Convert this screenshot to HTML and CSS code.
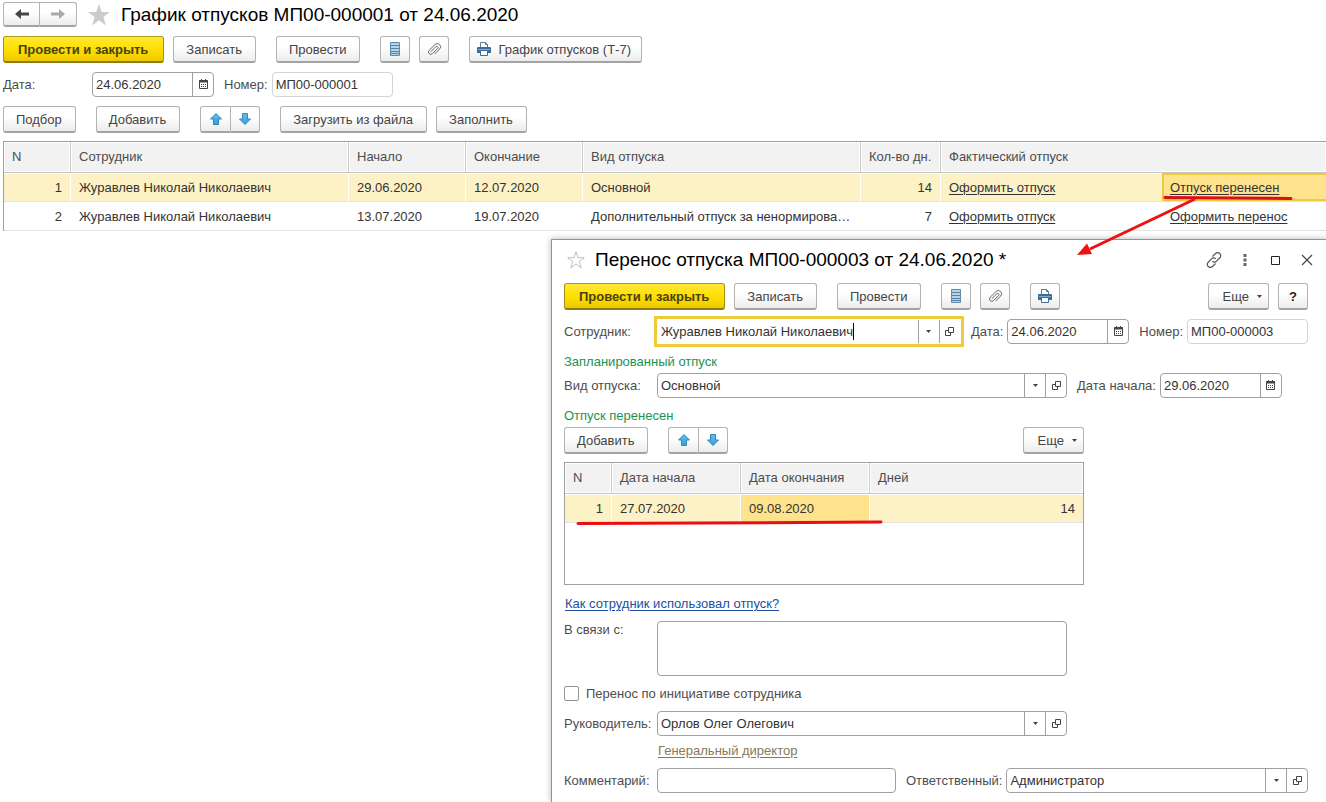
FILE: index.html
```html
<!DOCTYPE html>
<html lang="ru">
<head>
<meta charset="utf-8">
<title>График отпусков</title>
<link rel="stylesheet" href="styles.css">
</head>
<body>
<svg class="sprite" aria-hidden="true">
  <defs>
    <linearGradient id="blue" x1="0" y1="0" x2="0" y2="1"><stop offset="0" stop-color="#62bdf0"/><stop offset="1" stop-color="#35a0de"/></linearGradient>
  </defs>
  <symbol id="i-back" viewBox="0 0 16 12"><path d="M15 6H4" stroke="currentColor" stroke-width="3"/><path d="M1 6l6-5v10z" fill="currentColor"/></symbol>
  <symbol id="i-forward" viewBox="0 0 16 12"><path d="M1 6h11" stroke="currentColor" stroke-width="3"/><path d="M15 6L9 1v10z" fill="currentColor"/></symbol>
  <symbol id="i-star" viewBox="0 0 24 24"><path d="M12 1l2.700 8H23l-6.600 5 2.500 8.500L12 17.300 5.100 22.500 7.600 14 1 9h8.300z"/></symbol>
  <symbol id="i-list" viewBox="0 0 12 16"><path d="M1.500 1.500h9v13h-9z" fill="#b4d3e8" stroke="#6089aa"/><path d="M2 4.500h8M2 7.500h8M2 10.500h8M2 12.500h8" stroke="#5783a6"/></symbol>
  <symbol id="i-clip" viewBox="0 0 16 16"><path d="M5 10.500l5-5a1.300 1.300 0 0 1 1.800 1.800l-5.300 5.300a2.300 2.300 0 0 1-3.300-3.300l5.800-5.800a3.200 3.200 0 0 1 4.600 4.600l-4.600 4.600" fill="none" stroke="#666" stroke-linecap="round"/></symbol>
  <symbol id="i-print" viewBox="0 0 16 16"><path d="M4.500 7V1.500h5l2 2V7" fill="#fff" stroke="#54799b"/><path d="M9.500 1.500v2h2" fill="none" stroke="#54799b"/><path d="M2 6h12a1 1 0 0 1 1 1v5H1V7a1 1 0 0 1 1-1z" fill="#3d6c98"/><path d="M2 8.500h12" stroke="#85aacb"/><path d="M4.500 9.500h7v5h-7z" fill="#fff" stroke="#3d6c98"/></symbol>
  <symbol id="i-up" viewBox="0 0 14 14"><path d="M7 1.500L12.500 7H9.500v5.500h-5V7h-3z" fill="url(#blue)" stroke="#3585b5"/></symbol>
  <symbol id="i-down" viewBox="0 0 14 14"><path d="M7 12.500L1.500 7h3V1.500h5V7h3z" fill="url(#blue)" stroke="#3585b5"/></symbol>
  <symbol id="i-cal" viewBox="0 0 11 11"><path d="M1.500 1.500h8v8h-8z" fill="none" stroke="#444"/><path d="M1 2.500h9" stroke="#444" stroke-width="2"/><path d="M3.500 0v2M7.500 0v2" stroke="#444"/><path d="M3 5.500h6M3 7.500h6" stroke="#444" stroke-dasharray="1 1"/></symbol>
  <symbol id="i-caret" viewBox="0 0 5 3"><path d="M0 0h5L2.500 3z" fill="#444"/></symbol>
  <symbol id="i-open" viewBox="0 0 9 9"><path d="M3.500.5h5v5h-5z" fill="none" stroke="#444"/><path d="M3 3.500H.5v5h5V6" fill="none" stroke="#444"/></symbol>
  <symbol id="i-link" viewBox="0 0 18 18"><g fill="none" stroke="#555" stroke-width="1.200"><path d="M7.500 5.500l3-3a3 3 0 0 1 4.300 0 3 3 0 0 1 0 4.300l-3.300 3.300a3 3 0 0 1-4.200 0"/><path d="M10.500 12.500l-3 3a3 3 0 0 1-4.300 0 3 3 0 0 1 0-4.300l3.300-3.300a3 3 0 0 1 4.200 0"/></g></symbol>
  <symbol id="i-dots" viewBox="0 0 4 12"><path d="M.5 0h3v3h-3zM.5 4.500h3v3h-3zM.5 9h3v3h-3z" fill="#666"/></symbol>
  <symbol id="i-max" viewBox="0 0 9 9"><path d="M.5.5h8v8h-8z" fill="none" stroke="#222"/></symbol>
  <symbol id="i-close" viewBox="0 0 12 12"><path d="M1 1l10 10M11 1L1 11" stroke="#444" stroke-width="1.200"/></symbol>
</svg>

<main class="document">
  <header class="title-row">
    <div class="button-pair nav">
      <button class="btn" type="button" aria-label="Назад"><svg width="16" height="12"><use href="#i-back"/></svg></button>
      <button class="btn" type="button" aria-label="Вперед" disabled><svg width="16" height="12"><use href="#i-forward"/></svg></button>
    </div>
    <button class="plain star" type="button" aria-label="В избранное"><svg width="24" height="24"><use href="#i-star"/></svg></button>
    <h1>График отпусков МП00-000001 от 24.06.2020</h1>
  </header>

  <div class="toolbar commands">
    <button class="btn primary" type="button">Провести и закрыть</button>
    <button class="btn" type="button">Записать</button>
    <button class="btn spaced" type="button">Провести</button>
    <button class="btn square spaced" type="button" aria-label="Движения"><svg width="12" height="16"><use href="#i-list"/></svg></button>
    <button class="btn square" type="button" aria-label="Файлы"><svg width="16" height="16"><use href="#i-clip"/></svg></button>
    <button class="btn print spaced" type="button"><svg width="16" height="16"><use href="#i-print"/></svg>График отпусков (Т-7)</button>
  </div>

  <div class="form-row main-fields">
    <label for="doc-date">Дата:</label>
    <div class="field date"><input id="doc-date" type="text" value="24.06.2020"><button type="button" aria-label="Календарь"><svg width="11" height="11"><use href="#i-cal"/></svg></button></div>
    <label class="inline" for="doc-number">Номер:</label>
    <div class="field number"><input id="doc-number" type="text" value="МП00-000001" readonly></div>
  </div>

  <div class="toolbar">
    <button class="btn" type="button">Подбор</button>
    <button class="btn spaced" type="button">Добавить</button>
    <div class="button-pair spaced">
      <button class="btn" type="button" aria-label="Вверх"><svg width="14" height="14"><use href="#i-up"/></svg></button>
      <button class="btn" type="button" aria-label="Вниз"><svg width="14" height="14"><use href="#i-down"/></svg></button>
    </div>
    <button class="btn spaced" type="button">Загрузить из файла</button>
    <button class="btn" type="button">Заполнить</button>
  </div>

  <div class="grid-frame schedule">
    <table>
      <colgroup><col class="c-n"><col class="c-person"><col class="c-date"><col class="c-date"><col class="c-person"><col class="c-days"><col class="c-fact"><col></colgroup>
      <thead>
        <tr><th>N</th><th>Сотрудник</th><th>Начало</th><th>Окончание</th><th>Вид отпуска</th><th>Кол-во дн.</th><th colspan="2">Фактический отпуск</th></tr>
      </thead>
      <tbody>
        <tr class="selected"><td class="num">1</td><td>Журавлев Николай Николаевич</td><td>29.06.2020</td><td>12.07.2020</td><td>Основной</td><td class="num">14</td><td class="open"><a href="#leave-1">Оформить отпуск</a></td><td class="active framed"><a href="#transfer-1">Отпуск перенесен</a></td></tr>
        <tr><td class="num">2</td><td>Журавлев Николай Николаевич</td><td>13.07.2020</td><td>19.07.2020</td><td>Дополнительный отпуск за ненормирова…</td><td class="num">7</td><td class="open"><a href="#leave-2">Оформить отпуск</a></td><td><a href="#transfer-2">Оформить перенос</a></td></tr>
      </tbody>
    </table>
  </div>
</main>

<section class="window" aria-labelledby="window-title">
  <header class="window-title">
    <button class="plain star outline" type="button" aria-label="В избранное"><svg width="18" height="18"><use href="#i-star"/></svg></button>
    <h2 id="window-title">Перенос отпуска МП00-000003 от 24.06.2020 *</h2>
    <div class="window-controls">
      <button class="plain" type="button" aria-label="Ссылка"><svg width="18" height="18"><use href="#i-link"/></svg></button>
      <button class="plain" type="button" aria-label="Меню"><svg width="4" height="12"><use href="#i-dots"/></svg></button>
      <button class="plain" type="button" aria-label="Развернуть"><svg width="9" height="9"><use href="#i-max"/></svg></button>
      <button class="plain" type="button" aria-label="Закрыть"><svg width="12" height="12"><use href="#i-close"/></svg></button>
    </div>
  </header>

  <div class="toolbar window-commands">
    <button class="btn primary" type="button">Провести и закрыть</button>
    <button class="btn" type="button">Записать</button>
    <button class="btn spaced" type="button">Провести</button>
    <button class="btn square spaced" type="button" aria-label="Движения"><svg width="12" height="16"><use href="#i-list"/></svg></button>
    <button class="btn square" type="button" aria-label="Файлы"><svg width="16" height="16"><use href="#i-clip"/></svg></button>
    <button class="btn square spaced" type="button" aria-label="Печать"><svg width="16" height="16"><use href="#i-print"/></svg></button>
    <button class="btn more push" type="button">Еще<svg width="5" height="3"><use href="#i-caret"/></svg></button>
    <button class="btn square help" type="button">?</button>
  </div>

  <div class="form-row">
    <label for="employee">Сотрудник:</label>
    <div class="field grow focused"><span class="editing"><input id="employee" type="text" value="Журавлев Николай Николаевич"></span><button type="button" aria-label="Выбрать"><svg width="5" height="3"><use href="#i-caret"/></svg></button><button type="button" aria-label="Открыть"><svg width="9" height="9"><use href="#i-open"/></svg></button></div>
    <label class="inline" for="transfer-date">Дата:</label>
    <div class="field date"><input id="transfer-date" type="text" value="24.06.2020"><button type="button" aria-label="Календарь"><svg width="11" height="11"><use href="#i-cal"/></svg></button></div>
    <label class="inline" for="transfer-number">Номер:</label>
    <div class="field number"><input id="transfer-number" type="text" value="МП00-000003" readonly></div>
  </div>

  <h3>Запланированный отпуск</h3>
  <div class="form-row">
    <label for="kind">Вид отпуска:</label>
    <div class="field wide"><input id="kind" type="text" value="Основной"><button type="button" aria-label="Выбрать"><svg width="5" height="3"><use href="#i-caret"/></svg></button><button type="button" aria-label="Открыть"><svg width="9" height="9"><use href="#i-open"/></svg></button></div>
    <label class="inline" for="start-date">Дата начала:</label>
    <div class="field date"><input id="start-date" type="text" value="29.06.2020"><button type="button" aria-label="Календарь"><svg width="11" height="11"><use href="#i-cal"/></svg></button></div>
  </div>

  <h3>Отпуск перенесен</h3>
  <div class="periods">
    <div class="toolbar">
      <button class="btn" type="button">Добавить</button>
      <div class="button-pair spaced">
        <button class="btn" type="button" aria-label="Вверх"><svg width="14" height="14"><use href="#i-up"/></svg></button>
        <button class="btn" type="button" aria-label="Вниз"><svg width="14" height="14"><use href="#i-down"/></svg></button>
      </div>
      <button class="btn more push" type="button">Еще<svg width="5" height="3"><use href="#i-caret"/></svg></button>
    </div>
    <div class="grid-frame">
      <table>
        <colgroup><col class="p-n"><col class="p-date"><col class="p-date"><col></colgroup>
        <thead><tr><th>N</th><th>Дата начала</th><th>Дата окончания</th><th>Дней</th></tr></thead>
        <tbody><tr class="selected"><td class="num">1</td><td>27.07.2020</td><td class="active">09.08.2020</td><td class="num">14</td></tr></tbody>
      </table>
    </div>
  </div>

  <a class="usage" href="#usage">Как сотрудник использовал отпуск?</a>

  <div class="form-row top">
    <label for="reason">В связи с:</label>
    <textarea id="reason"></textarea>
  </div>
  <div class="check-row"><input id="initiative" type="checkbox"><label for="initiative">Перенос по инициативе сотрудника</label></div>
  <div class="form-row">
    <label for="manager">Руководитель:</label>
    <div class="field wide"><input id="manager" type="text" value="Орлов Олег Олегович"><button type="button" aria-label="Выбрать"><svg width="5" height="3"><use href="#i-caret"/></svg></button><button type="button" aria-label="Открыть"><svg width="9" height="9"><use href="#i-open"/></svg></button></div>
  </div>
  <a class="position" href="#position">Генеральный директор</a>
  <div class="form-row">
    <label for="comment">Комментарий:</label>
    <div class="field comment"><input id="comment" type="text"></div>
    <label class="inline" for="responsible">Ответственный:</label>
    <div class="field grow"><input id="responsible" type="text" value="Администратор"><button type="button" aria-label="Выбрать"><svg width="5" height="3"><use href="#i-caret"/></svg></button><button type="button" aria-label="Открыть"><svg width="9" height="9"><use href="#i-open"/></svg></button></div>
  </div>
</section>

<svg class="marks" width="1326" height="802" aria-hidden="true">
  <path d="M1165 197.500L1291 198.500" stroke="#d8101c" stroke-width="3" stroke-linecap="round"/>
  <path d="M1195 199L1090 249" stroke="#f01010" stroke-width="3"/>
  <path d="M1077 255L1087 243.500 1092 254z" fill="#f01010"/>
  <path d="M578 523.500L700 523 881 522" stroke="#ec0c14" stroke-width="3" stroke-linecap="round" fill="none"/>
</svg>
</body>
</html>
```
FILE: styles.css
```css
* { box-sizing: border-box; }

body {
  margin: 0;
  min-height: 100vh;
  overflow: hidden;
  background: #fff;
  color: #333;
  font: 13px/15px "Liberation Sans", Arial, sans-serif;
}

button, input, textarea { font: inherit; color: inherit; }
button { cursor: pointer; }
svg { display: block; flex: none; }
.sprite { position: absolute; width: 0; height: 0; }
h1, h2, h3 { margin: 0; font-weight: 400; }
h1, h2 { color: #000; font-size: 19px; line-height: 24px; white-space: nowrap; }
h3 { color: #1a934e; font-size: 13px; line-height: 15px; }
label { color: #4d4d4d; white-space: nowrap; }

.document { padding: 2px 0 0 3px; }
.title-row { display: flex; align-items: center; height: 25px; }
.title-row .star { margin: 0 10px; }

.plain {
  display: flex;
  align-items: center;
  justify-content: center;
  padding: 0;
  border: 0;
  background: none;
}
.star { fill: #ccc; }
.star.outline { fill: #fff; stroke: #aaa; stroke-width: 1; }

.toolbar { display: flex; gap: 9px; }
.spaced { margin-left: 11px; }
.push { margin-left: auto; }
.commands { margin-top: 9px; }

.btn {
  display: flex;
  align-items: center;
  justify-content: center;
  height: 27px;
  padding: 0 13px 0 12px;
  border: 1px solid #b3b3b3;
  border-bottom: 2px solid #a3a3a3;
  border-radius: 3px;
  background: linear-gradient(#fff 40%, #ececec);
  color: #444;
  white-space: nowrap;
}
.btn.primary {
  padding: 0 15px 0 14px;
  border-color: #b09a10 #a8920c #8f7c10;
  background: linear-gradient(#ffe838, #ffe000 50%, #ecc900);
  color: #4b4210;
  font-weight: 700;
}
.btn.square { width: 30px; padding: 0; }
.btn.print { gap: 6px; padding: 0 10px 0 6px; }
.btn.more { gap: 8px; padding: 0 6px 0 14px; }
.btn.help { color: #222; font-weight: 700; }

.button-pair { display: flex; }
.button-pair .btn { width: 30px; padding: 0; }
.button-pair .btn:first-child { width: 31px; border-radius: 3px 0 0 3px; }
.button-pair .btn:last-child { border-left: 0; border-radius: 0 3px 3px 0; width: 29px; }
.nav .btn:first-child, .nav .btn:last-child { width: 37px; height: 25px; }
.nav .btn:disabled { color: #aaa; }

.form-row { display: flex; align-items: center; }
.form-row > label { flex: none; width: 93px; }
.form-row > label.inline { width: auto; margin: 0 4px 0 10px; }
.form-row.top { align-items: flex-start; }
.form-row.top label { padding-top: 1px; }
.main-fields { margin: 9px 0; }
.main-fields > label { width: 89px; }

.field {
  display: flex;
  height: 25px;
  border: 1px solid #a0a0a0;
  border-radius: 4px;
  background: #fff;
}
.field input {
  flex: 1;
  width: 0;
  min-width: 0;
  padding: 0 3px;
  border: 0;
  outline: 0;
  background: none;
}
.field button {
  display: flex;
  align-items: center;
  justify-content: center;
  width: 21px;
  padding: 0;
  border: 0;
  border-left: 1px solid #a0a0a0;
  background: none;
}
.field.date { width: 122px; }
.field.number { width: 121px; border-color: #d4d4d4; }
.field.wide { width: 410px; }
.field.comment { width: 239px; }
.field.grow { flex: 1; }
.field.focused { border-color: #fff; border-radius: 0; box-shadow: 0 0 0 3px #efca3c; }
.editing { display: flex; flex: 1; align-items: center; min-width: 0; }
.editing input { flex: none; width: auto; padding-right: 0; field-sizing: content; }
.editing::after { width: 1px; height: 17px; background: #000; content: ""; }

textarea {
  width: 410px;
  height: 55px;
  border: 1px solid #a0a0a0;
  border-radius: 4px;
  resize: none;
}

.grid-frame { border: 1px solid #a0a0a0; }
.schedule { margin-top: 8px; border-right: 0; border-bottom: 0; }
table { width: 100%; border-collapse: separate; border-spacing: 0; table-layout: fixed; }
th, td {
  overflow: hidden;
  padding: 0 8px;
  text-align: left;
  text-overflow: ellipsis;
  white-space: nowrap;
}
th {
  height: 31px;
  padding-bottom: 2px;
  border-right: 1px solid #ccc;
  border-bottom: 1px solid #c4c4c4;
  background: #f2f2f2;
  box-shadow: inset 0 0 0 1px #fff;
  color: #4d4d4d;
  font-weight: 400;
}
td { height: 29px; border-right: 1px solid #fff; border-bottom: 1px solid #e2e2e2; background-clip: padding-box; }
th:last-child, td:last-child, td.open { border-right: 0; }
td a { color: #333; text-underline-offset: 2px; }
.num { text-align: right; }
.selected td { background-color: #fdf1c6; box-shadow: inset 0 1px #fff; }
.selected .active { background-color: #fee38c; }
.selected .framed { box-shadow: inset 2px 2px #efca3c, inset 0 -2px #efca3c; }
.c-n { width: 67px; }
.c-person { width: 278px; }
.c-date { width: 117px; }
.c-days { width: 80px; }
.c-fact { width: 221px; }
.p-n { width: 47px; }
.p-date { width: 129px; }

.window {
  position: absolute;
  top: 239px;
  right: 0;
  bottom: 0;
  left: 551px;
  overflow: hidden;
  padding: 0 18px 0 12px;
  border: 1px solid #949494;
  border-width: 1px 0 0 1px;
  background: #fff;
  box-shadow: 0 0 6px rgba(0, 0, 0, .3);
}
.window-title { display: flex; align-items: center; gap: 10px; height: 43px; padding: 0 0 3px 3px; }
.window-controls { display: flex; margin: 0 -14px 0 auto; }
.window-controls button { width: 31px; height: 24px; }
.window-commands { margin-bottom: 9px; }
.window h3 { margin: 10px 0 4px; }

.periods { width: 520px; }
.periods .grid-frame { height: 123px; margin-top: 8px; }
.usage { display: block; margin: 11px 0 10px; padding-left: 1px; color: #1c4fa0; text-underline-offset: 2px; }
.check-row { display: flex; align-items: center; gap: 6px; margin: 10px 0; }
.check-row input {
  width: 15px;
  height: 15px;
  margin: 0 1px 0 0;
  border: 1px solid #949494;
  border-radius: 2px;
  appearance: none;
}
.position { display: block; margin: 7px 0 10px 94px; color: #857a5b; text-underline-offset: 2px; }
.marks { position: absolute; top: 0; left: 0; pointer-events: none; }
```
